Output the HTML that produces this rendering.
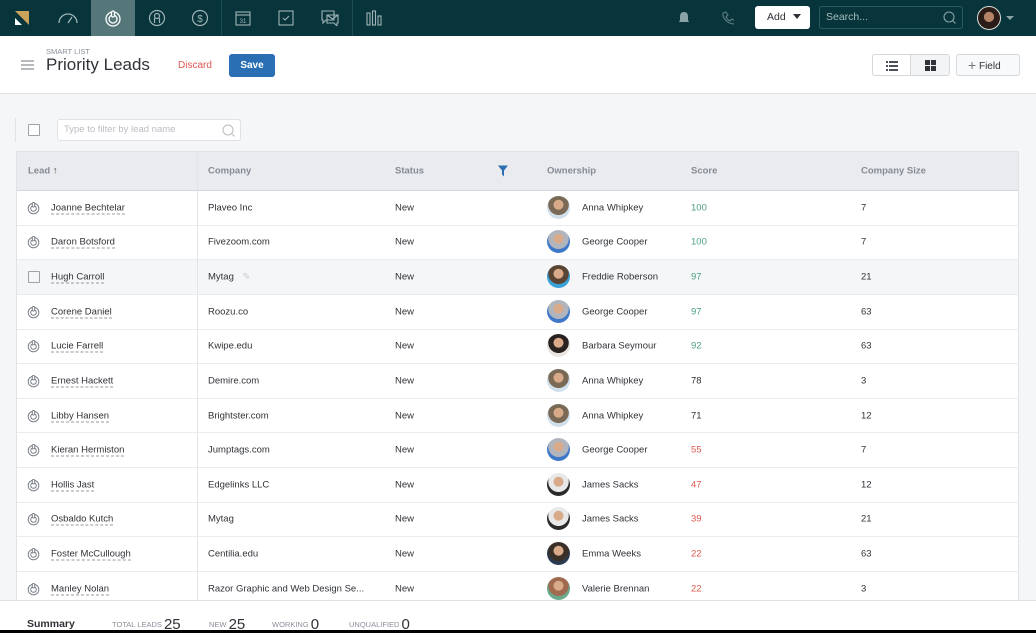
<!DOCTYPE html>
<html><head><meta charset="utf-8"><style>
*{box-sizing:border-box;margin:0;padding:0}
body{width:1036px;height:633px;overflow:hidden;background:#f5f6f8;font-family:"Liberation Sans",sans-serif;color:#2f3237;position:relative;font-size:10px}
.nav{position:absolute;left:0;top:0;width:1036px;height:36px;background:#07353b}
.ni{position:absolute;top:0;height:36px;width:44px;display:flex;align-items:center;justify-content:center}
.sep{position:absolute;top:0;width:1px;height:36px;background:#1d4c52}
.hdr{position:absolute;left:0;top:36px;width:1036px;height:58px;background:#fff;border-bottom:1px solid #dfe1e5}
.btn{position:absolute;border:1px solid #d4d7dc;border-radius:3px;background:#fff}
.tbl{position:absolute;left:16px;top:151px;width:1003px;background:#fff;border:1px solid #e0e2e6}
.th{height:39px;background:#e9ebef;border-bottom:1px solid #d3d6dc;position:relative;color:#858b94;font-size:9.5px;font-weight:bold}
.row{height:34.64px;border-bottom:1px solid #eaecef;position:relative;font-size:9.5px}
.c{position:absolute;top:50%;transform:translateY(-50%);white-space:nowrap}
.vl{position:absolute;left:180px;top:0;bottom:0;width:1px;background:#e3e5e8}
.nm{border-bottom:1px dashed #999;color:#2f3237}
.av{position:absolute;left:530px;top:50%;margin-top:-12px;width:23px;height:23px;border-radius:50%}
.ft{position:absolute;top:15px;font-size:7.5px;color:#8a9099}
.ft b{font-size:15px;color:#2f3237;font-weight:normal;vertical-align:-2px}
</style></head><body>
<div class="nav">
 <div class="ni" style="left:0"><svg width="18" height="18"><polygon points="2,2 16,2 16,16" fill="#c9a45a"/><polygon points="2,9 9,16 2,16" fill="#fff"/></svg></div>
 <div class="ni" style="left:46px"><svg width="22" height="14" stroke="#9fb3b5" fill="none" stroke-width="1.3"><path d="M2 12a9 9 0 0 1 18 0"/><path d="M11 12l4-6"/></svg></div>
 <div class="ni" style="left:91px;background:#56777a"><svg width="18" height="18" stroke="#fff" fill="none" stroke-width="1.3"><circle cx="9" cy="10" r="7"/><circle cx="9" cy="10" r="4"/><rect x="7.5" y="2" width="3" height="6" rx="1.5" fill="#56777a"/></svg></div>
 <div class="ni" style="left:135px"><svg width="18" height="18" stroke="#9fb3b5" fill="none" stroke-width="1.2"><circle cx="9" cy="9" r="7.5"/><circle cx="9" cy="7" r="2.5"/><path d="M6.5 9v5M11.5 9v5"/></svg></div>
 <div class="ni" style="left:178px"><svg width="18" height="18" stroke="#9fb3b5" fill="none" stroke-width="1.2"><circle cx="9" cy="9" r="7.5"/><text x="9" y="13" font-size="10" text-anchor="middle" fill="#9fb3b5" stroke="none" font-family="Liberation Sans">$</text></svg></div>
 <div class="sep" style="left:221px"></div>
 <div class="ni" style="left:221px"><svg width="16" height="16" stroke="#9fb3b5" fill="none" stroke-width="1.1"><rect x="1" y="2" width="14" height="13"/><path d="M1 5h14"/><text x="8" y="13" font-size="6" text-anchor="middle" fill="#9fb3b5" stroke="none">31</text></svg></div>
 <div class="ni" style="left:264px"><svg width="16" height="16" stroke="#9fb3b5" fill="none" stroke-width="1.1"><rect x="1" y="1" width="14" height="14"/><path d="M5 8l2 2 4-4"/></svg></div>
 <div class="ni" style="left:308px"><svg width="18" height="16" stroke="#9fb3b5" fill="none" stroke-width="1.1"><path d="M1 1h12v9H5l-3 3v-3H1z"/><path d="M6 5h11v8h-1v3l-3-3H6z"/><path d="M6 5l5.5 4 5.5-4"/></svg></div>
 <div class="sep" style="left:352px"></div>
 <div class="ni" style="left:352px"><svg width="16" height="16" stroke="#9fb3b5" fill="none" stroke-width="1.1"><rect x="1" y="3" width="3" height="12"/><rect x="6.5" y="1" width="3" height="14"/><rect x="12" y="6" width="3" height="9"/></svg></div>
 <svg style="position:absolute;left:678px;top:11px" width="12" height="13"><path d="M6 1c-3 0-4 2-4 5v3l-1 2h10l-1-2V6c0-3-1-5-4-5z M4.5 12h3" fill="#8aa3a6"/></svg>
 <svg style="position:absolute;left:721px;top:11px" width="13" height="14" stroke="#5d7e82" fill="none" stroke-width="1.1"><path d="M2 2l3-1 2 3-2 2c1 2 2 3 4 4l2-2 3 2-1 3C7 13 1 7 2 2z"/></svg>
 <div style="position:absolute;left:755px;top:6px;width:55px;height:23px;background:#fff;border-radius:3px;font-size:10.5px;line-height:23px;padding-left:12px;color:#2f3237">Add <span style="display:inline-block;width:0;height:0;border-left:4px solid transparent;border-right:4px solid transparent;border-top:5px solid #2f3237;margin-left:4px;vertical-align:1px"></span></div>
 <div style="position:absolute;left:819px;top:6px;width:144px;height:23px;border:1px solid #2c5c61;border-radius:3px;font-size:10.5px;line-height:21px;padding-left:6px;color:#a7bcbe">Search...<svg style="position:absolute;right:6px;top:4px" width="13" height="13" stroke="#8aa3a6" fill="none" stroke-width="1.1"><circle cx="6" cy="6" r="5"/><path d="M9.5 9.5l3 3"/></svg></div>
 <div style="position:absolute;left:977px;top:6px;width:24px;height:24px;border-radius:50%;background:radial-gradient(circle at 50% 45%,#b58365 0 30%,#2b1c17 32%);border:1px solid #ddd"></div>
 <div style="position:absolute;left:1006px;top:16px;border-left:4px solid transparent;border-right:4px solid transparent;border-top:4px solid #8aa3a6"></div>
</div>
<div class="hdr">
 <svg style="position:absolute;left:21px;top:24px" width="13" height="10" stroke="#8a9099" stroke-width="1.2"><path d="M0 1h13M0 5h13M0 9h13"/></svg>
 <div style="position:absolute;left:46px;top:11px;font-size:7.5px;color:#8a9099">SMART LIST</div>
 <div style="position:absolute;left:46px;top:19px;font-size:17px;color:#2f3237">Priority Leads</div>
 <div style="position:absolute;left:178px;top:24px;font-size:10px;color:#e0574f">Discard</div>
 <div style="position:absolute;left:229px;top:18px;width:46px;height:23px;background:#2a6fb3;border-radius:3px;color:#fff;font-size:10px;line-height:23px;text-align:center;font-weight:bold">Save</div>
 <div class="btn" style="left:872px;top:18px;width:78px;height:22px;overflow:hidden"><div style="position:absolute;left:37px;top:0;width:40px;height:22px;background:#f3f4f6;border-left:1px solid #d4d7dc"></div>
 <svg style="position:absolute;left:13px;top:6px" width="12" height="10" fill="#4a4f57"><rect x="0" y="0" width="2" height="2"/><rect x="3" y="0" width="9" height="2"/><rect x="0" y="4" width="2" height="2"/><rect x="3" y="4" width="9" height="2"/><rect x="0" y="8" width="2" height="2"/><rect x="3" y="8" width="9" height="2"/></svg>
 <svg style="position:absolute;left:52px;top:5px" width="11" height="11" fill="#2f3237"><rect x="0" y="0" width="5" height="5"/><rect x="6" y="0" width="5" height="5"/><rect x="0" y="6" width="5" height="5"/><rect x="6" y="6" width="5" height="5"/></svg></div>
 <div class="btn" style="left:956px;top:18px;width:64px;height:22px;background:#f8f9fa;font-size:10px;line-height:20px;padding-left:11px;color:#2f3237"><span style="font-size:14px;color:#777;vertical-align:-1px">+</span> Field</div>
</div>
<div style="position:absolute;left:15px;top:118px;width:1px;height:24px;background:#e0e2e6"></div>
<div style="position:absolute;left:28px;top:124px;width:12px;height:12px;border:1px solid #9da2a9;border-radius:1px;background:#fff"></div>
<div style="position:absolute;left:57px;top:119px;width:184px;height:22px;border:1px solid #dfe1e5;border-radius:3px;background:#fff;font-size:9.5px;color:#b9bdc3;line-height:20px;padding-left:6px">Type to filter by lead name<svg style="position:absolute;right:5px;top:4px" width="13" height="13" stroke="#bbb" fill="none"><circle cx="6" cy="6" r="5"/><path d="M9.5 9.5l3 3"/></svg></div>
<div class="tbl">
 <div class="th"><div class="vl"></div>
  <span class="c" style="left:11px">Lead <span style="color:#555">↑</span></span>
  <span class="c" style="left:191px">Company</span>
  <span class="c" style="left:378px">Status</span>
  <svg class="c" style="left:481px" width="10" height="11"><path d="M0 0h10L6 5v6L4 9V5z" fill="#2a6fb3"/></svg>
  <span class="c" style="left:530px">Ownership</span>
  <span class="c" style="left:674px">Score</span>
  <span class="c" style="left:844px">Company Size</span>
 </div>
 <div id="rows"></div>
</div>
<div style="position:absolute;left:0;top:600px;width:1036px;height:30px;background:#fff;border-top:1px solid #dfe1e5">
 <span style="position:absolute;left:27px;top:17px;font-size:10.5px;font-weight:bold;color:#2f3237">Summary</span>
 <span class="ft" style="left:112px">TOTAL LEADS <b>25</b></span>
 <span class="ft" style="left:209px">NEW <b>25</b></span>
 <span class="ft" style="left:272px">WORKING <b>0</b></span>
 <span class="ft" style="left:349px">UNQUALIFIED <b>0</b></span>
</div>
<div style="position:absolute;left:0;top:630px;width:1036px;height:3px;background:#000"></div>
<script>
var d=[["Joanne Bechtelar","Plaveo Inc","Anna Whipkey",100,7],["Daron Botsford","Fivezoom.com","George Cooper",100,7],["Hugh Carroll","Mytag","Freddie Roberson",97,21],["Corene Daniel","Roozu.co","George Cooper",97,63],["Lucie Farrell","Kwipe.edu","Barbara Seymour",92,63],["Ernest Hackett","Demire.com","Anna Whipkey",78,3],["Libby Hansen","Brightster.com","Anna Whipkey",71,12],["Kieran Hermiston","Jumptags.com","George Cooper",55,7],["Hollis Jast","Edgelinks LLC","James Sacks",47,12],["Osbaldo Kutch","Mytag","James Sacks",39,21],["Foster McCullough","Centilia.edu","Emma Weeks",22,63],["Manley Nolan","Razor Graphic and Web Design Se...","Valerie Brennan",22,3]];
var av={"Anna Whipkey":"#7a6a55,#cfe0ea","George Cooper":"#b0b4bc,#3f78c8","Freddie Roberson":"#5a4535,#3aa0d8","Barbara Seymour":"#2a2220,#e8e4df","James Sacks":"#e8e8e8,#2a2a2a","Emma Weeks":"#3a3028,#2a3a50","Valerie Brennan":"#a06a50,#6aa88a"};
var h="";d.forEach(function(r,i){var s=r[3],col=s>=90?"#4aa07f":s>=60?"#2f3237":"#e0574f";var a=av[r[2]].split(",");
var icon=i==2?'<span class="c" style="left:11px;width:12px;height:12px;border:1px solid #9da2a9;border-radius:1px"></span>':'<svg class="c" style="left:10px" width="13" height="13" stroke="#7d828a" fill="none" stroke-width="1"><circle cx="6.5" cy="7" r="5.3"/><circle cx="6.5" cy="7" r="2.8"/><rect x="5.3" y="1" width="2.4" height="4.5" rx="1.2" fill="#fff"/></svg>';
h+='<div class="row" style="background:'+(i==2?"#f5f6f8":"#fff")+'"><div class="vl"></div>'+icon+'<span class="c" style="left:34px"><span class="nm">'+r[0]+'</span></span><span class="c" style="left:191px">'+r[1]+(i==2?' <span style="color:#ccc;margin-left:6px">✎</span>':'')+'</span><span class="c" style="left:378px">New</span><div class="av" style="background:radial-gradient(circle at 50% 38%,#d9aa8a 0 26%,'+a[0]+' 28% 55%,'+a[1]+' 57%)"></div><span class="c" style="left:565px">'+r[2]+'</span><span class="c" style="left:674px;color:'+col+'">'+s+'</span><span class="c" style="left:844px">'+r[4]+'</span></div>';});
document.getElementById("rows").innerHTML=h;
</script>
</body></html>
